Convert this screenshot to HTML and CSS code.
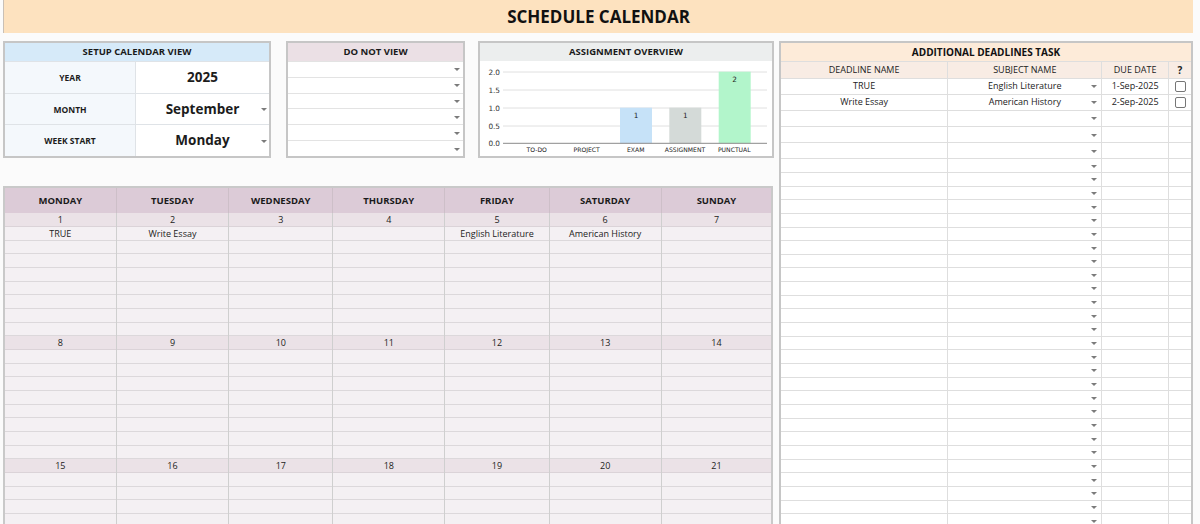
FILE: index.html
```html
<!DOCTYPE html>
<html lang="en">
<head>
<meta charset="utf-8">
<title>Schedule Calendar</title>
<link rel="stylesheet" href="styles.css">
</head>
<body>
<div class="page">
  <div class="title">SCHEDULE CALENDAR</div>
  <div class="main">
    <div class="left">
      <div class="top">
        <section class="panel setup">
          <div class="ph ph-blue">SETUP CALENDAR VIEW</div>
          <div class="srow"><div class="slabel">YEAR</div><div class="sval">2025</div></div>
          <div class="srow"><div class="slabel">MONTH</div><div class="sval dd">September</div></div>
          <div class="srow last"><div class="slabel">WEEK START</div><div class="sval dd">Monday</div></div>
        </section>
        <section class="panel dnv">
          <div class="ph ph-mauve">DO NOT VIEW</div>
          <div class="nrow dd"></div>
          <div class="nrow dd"></div>
          <div class="nrow dd"></div>
          <div class="nrow dd"></div>
          <div class="nrow dd"></div>
          <div class="nrow dd last"></div>
        </section>
        <section class="panel chart">
          <div class="ph ph-gray">ASSIGNMENT OVERVIEW</div>
          <svg class="plot" width="292" height="95" viewBox="0 0 292 95">
            <line class="grid" x1="23" y1="11" x2="287" y2="11"/>
            <line class="grid" x1="23" y1="29" x2="287" y2="29"/>
            <line class="grid" x1="23" y1="47" x2="287" y2="47"/>
            <line class="grid" x1="23" y1="65" x2="287" y2="65"/>
            <text class="ylab" x="20" y="13.8">2.0</text>
            <text class="ylab" x="20" y="31.8">1.5</text>
            <text class="ylab" x="20" y="49.8">1.0</text>
            <text class="ylab" x="20" y="67.8">0.5</text>
            <text class="ylab" x="20" y="85">0.0</text>
            <rect x="140" y="46.7" width="32" height="35.6" fill="#c6e2f8"/>
            <rect x="189.3" y="46.7" width="32" height="35.6" fill="#d4dad8"/>
            <rect x="238.7" y="10.7" width="32" height="71.6" fill="#b2f5cb"/>
            <line class="axis" x1="23" y1="82.3" x2="287" y2="82.3"/>
            <text class="vlab" x="156" y="56.8">1</text>
            <text class="vlab" x="205.3" y="56.8">1</text>
            <text class="vlab" x="254.7" y="20.8">2</text>
            <text class="xlab" x="56.7" y="91.3">TO-DO</text>
            <text class="xlab" x="106.7" y="91.3">PROJECT</text>
            <text class="xlab" x="155.7" y="91.3">EXAM</text>
            <text class="xlab" x="205" y="91.3">ASSIGNMENT</text>
            <text class="xlab" x="254.3" y="91.3">PUNCTUAL</text>
          </svg>
        </section>
      </div>
      <div class="cal">
        <div class="ch">MONDAY</div>
        <div class="ch">TUESDAY</div>
        <div class="ch">WEDNESDAY</div>
        <div class="ch">THURSDAY</div>
        <div class="ch">FRIDAY</div>
        <div class="ch">SATURDAY</div>
        <div class="ch">SUNDAY</div>

        <div class="day"><div class="date">1</div><div class="ev"><div>TRUE</div></div></div>
        <div class="day"><div class="date">2</div><div class="ev"><div>Write Essay</div></div></div>
        <div class="day"><div class="date">3</div><div class="ev"></div></div>
        <div class="day"><div class="date">4</div><div class="ev"></div></div>
        <div class="day"><div class="date">5</div><div class="ev"><div>English Literature</div></div></div>
        <div class="day"><div class="date">6</div><div class="ev"><div>American History</div></div></div>
        <div class="day"><div class="date">7</div><div class="ev"></div></div>

        <div class="day"><div class="date">8</div><div class="ev"></div></div>
        <div class="day"><div class="date">9</div><div class="ev"></div></div>
        <div class="day"><div class="date">10</div><div class="ev"></div></div>
        <div class="day"><div class="date">11</div><div class="ev"></div></div>
        <div class="day"><div class="date">12</div><div class="ev"></div></div>
        <div class="day"><div class="date">13</div><div class="ev"></div></div>
        <div class="day"><div class="date">14</div><div class="ev"></div></div>

        <div class="day"><div class="date">15</div><div class="ev"></div></div>
        <div class="day"><div class="date">16</div><div class="ev"></div></div>
        <div class="day"><div class="date">17</div><div class="ev"></div></div>
        <div class="day"><div class="date">18</div><div class="ev"></div></div>
        <div class="day"><div class="date">19</div><div class="ev"></div></div>
        <div class="day"><div class="date">20</div><div class="ev"></div></div>
        <div class="day"><div class="date">21</div><div class="ev"></div></div>
      </div>
    </div>

    <section class="deadlines">
      <div class="dh">ADDITIONAL DEADLINES TASK</div>
      <div class="r rh"><i>DEADLINE NAME</i><i>SUBJECT NAME</i><i>DUE DATE</i><i class="q">?</i></div>
      <div class="r"><i>TRUE</i><i class="s">English Literature</i><i>1-Sep-2025</i><i><b class="cb"></b></i></div>
      <div class="r"><i>Write Essay</i><i class="s">American History</i><i>2-Sep-2025</i><i><b class="cb"></b></i></div>
      <div class="r"><i></i><i class="s"></i><i></i><i></i></div>
      <div class="r"><i></i><i class="s"></i><i></i><i></i></div>
      <div class="r"><i></i><i class="s"></i><i></i><i></i></div>
      <div class="r sm"><i></i><i class="s"></i><i></i><i></i></div>
      <div class="r sm"><i></i><i class="s"></i><i></i><i></i></div>
      <div class="r sm"><i></i><i class="s"></i><i></i><i></i></div>
      <div class="r sm"><i></i><i class="s"></i><i></i><i></i></div>
      <div class="r sm"><i></i><i class="s"></i><i></i><i></i></div>
      <div class="r sm"><i></i><i class="s"></i><i></i><i></i></div>
      <div class="r sm"><i></i><i class="s"></i><i></i><i></i></div>
      <div class="r sm"><i></i><i class="s"></i><i></i><i></i></div>
      <div class="r sm"><i></i><i class="s"></i><i></i><i></i></div>
      <div class="r sm"><i></i><i class="s"></i><i></i><i></i></div>
      <div class="r sm"><i></i><i class="s"></i><i></i><i></i></div>
      <div class="r sm"><i></i><i class="s"></i><i></i><i></i></div>
      <div class="r sm"><i></i><i class="s"></i><i></i><i></i></div>
      <div class="r sm"><i></i><i class="s"></i><i></i><i></i></div>
      <div class="r sm"><i></i><i class="s"></i><i></i><i></i></div>
      <div class="r sm"><i></i><i class="s"></i><i></i><i></i></div>
      <div class="r sm"><i></i><i class="s"></i><i></i><i></i></div>
      <div class="r sm"><i></i><i class="s"></i><i></i><i></i></div>
      <div class="r sm"><i></i><i class="s"></i><i></i><i></i></div>
      <div class="r sm"><i></i><i class="s"></i><i></i><i></i></div>
      <div class="r sm"><i></i><i class="s"></i><i></i><i></i></div>
      <div class="r sm"><i></i><i class="s"></i><i></i><i></i></div>
      <div class="r sm"><i></i><i class="s"></i><i></i><i></i></div>
      <div class="r sm"><i></i><i class="s"></i><i></i><i></i></div>
      <div class="r sm"><i></i><i class="s"></i><i></i><i></i></div>
      <div class="r sm"><i></i><i class="s"></i><i></i><i></i></div>
      <div class="r sm"><i></i><i class="s"></i><i></i><i></i></div>
    </section>
  </div>
</div>
</body>
</html>
```
FILE: styles.css
```css
* { box-sizing: border-box; }
html, body {
  margin: 0;
  padding: 0;
  background: #fbfbfb;
  width: 1200px;
  height: 524px;
  overflow: hidden;
  font-family: "Open Sans", "Noto Sans", "Liberation Sans", sans-serif;
  color: #1c1c1c;
}
.page { width: 1200px; height: 524px; overflow: hidden; }

.title {
  margin-left: 3px;
  width: 1190px;
  height: 33px;
  background: #fde2bf;
  border-left: 1px solid #c9c0b6;
  text-align: center;
  font-weight: 700;
  font-size: 17px;
  line-height: 33px;
  color: #111;
}

.main {
  display: flex;
  align-items: flex-start;
  padding: 8px 0 0 3px;
}
.left { width: 771px; }
.top { display: flex; height: 117px; }

.panel {
  height: 117px;
  border: 2px solid #c6c6c6;
  background: #fff;
  display: flex;
  flex-direction: column;
}
.ph {
  height: 18px;
  flex: none;
  font-weight: 700;
  font-size: 9.5px;
  line-height: 18px;
  text-align: center;
  color: #1a1a1a;
}
.ph-blue { background: #d6eaf9; }
.ph-mauve { background: #ebe0e5; }
.ph-gray { background: #eceeee; }

.setup { width: 268px; }
.srow {
  flex: 1;
  display: flex;
  border-top: 1px solid #dfe3e7;
}
.slabel {
  width: 131px;
  background: #f4f8fc;
  border-right: 1px solid #dfe3e7;
  display: flex;
  align-items: center;
  justify-content: center;
  font-weight: 700;
  font-size: 8.5px;
}
.sval {
  flex: 1;
  position: relative;
  display: flex;
  align-items: center;
  justify-content: center;
  font-weight: 700;
  font-size: 13.5px;
  padding-bottom: 1px;
}
.sval.dd::after { right: 2px; }

.dd { position: relative; }
.dd::after,
.r i.s::after {
  content: "";
  position: absolute;
  top: 50%;
  margin-top: -1px;
  width: 0;
  height: 0;
  border-left: 3px solid transparent;
  border-right: 3px solid transparent;
  border-top: 3px solid #7b7b7b;
}

.dnv { width: 179px; margin-left: 15px; }
.nrow {
  flex: 1;
  border-top: 1px solid #e3e3e3;
}
.nrow.dd::after { right: 3px; }

.chart { width: 296px; margin-left: 13px; }
.plot { display: block; }
.grid { stroke: #e0e0e0; stroke-width: 1; }
.axis { stroke: #8a8a8a; stroke-width: 1; }
.ylab {
  font-family: "DejaVu Sans", "Verdana", sans-serif;
  font-size: 7.3px;
  fill: #333;
  text-anchor: end;
}
.vlab {
  font-family: "DejaVu Sans", sans-serif;
  font-size: 7.3px;
  fill: #222;
  text-anchor: middle;
}
.xlab {
  font-family: "DejaVu Sans", sans-serif;
  font-size: 6.1px;
  fill: #222;
  text-anchor: middle;
}

/* Calendar */
.cal {
  margin-top: 28px;
  width: 770px;
  border: 2px solid #c9c9c9;
  border-bottom: none;
  display: grid;
  grid-template-columns: 110.7px 112.6px 104px 112px 104.4px 112px 110.6px;
  grid-auto-rows: auto;
}
.ch {
  height: 25.3px;
  background: #dccbd7;
  font-weight: 700;
  font-size: 9.5px;
  line-height: 25.3px;
  text-align: center;
  border-left: 1px solid #cdbfc8;
  color: #1a1a1a;
}
.ch:first-child { border-left: none; }
.day {
  display: flex;
  flex-direction: column;
  border-left: 1px solid #cfcfcf;
}
.day:nth-child(7n+1) { border-left: none; }
.date {
  height: 13.67px;
  background: #ebe2e7;
  border-bottom: 1px solid #dbd3d8;
  font-size: 9px;
  line-height: 13px;
  text-align: center;
  color: #222;
}
.ev {
  height: 109.36px;
  background: repeating-linear-gradient(to bottom,
    #f4f0f3 0, #f4f0f3 12.67px, #dcd8db 12.67px, #dcd8db 13.67px);
}
.ev div {
  height: 13.67px;
  font-size: 9px;
  line-height: 13px;
  text-align: center;
  color: #222;
}

/* Deadlines */
.deadlines {
  width: 414px;
  margin-left: 5px;
  border: 2px solid #c6c6c6;
  border-bottom: none;
  background: #fff;
}
.dh {
  height: 18px;
  background: #fdebd9;
  font-weight: 700;
  font-size: 10px;
  line-height: 18px;
  text-align: center;
  color: #111;
}
.r {
  display: grid;
  grid-template-columns: 167.3px 154px 66.7px 22px;
  height: 16.12px;
}
.r.rh { height: 16.7px; background: #f8ece4; }
.r.sm { height: 13.67px; }
.r i {
  font-style: normal;
  position: relative;
  border-top: 1px solid #dedede;
  border-right: 1px solid #dedede;
  font-size: 9px;
  line-height: 14px;
  text-align: center;
  color: #222;
  display: flex;
  align-items: center;
  justify-content: center;
}
.r i:last-child { border-right: none; }
.r i.s::after { right: 4px; }
.r i.q { font-weight: 700; font-size: 10px; }
.cb {
  display: block;
  width: 11px;
  height: 11px;
  margin-left: 2px;
  border: 1px solid #767676;
  border-radius: 2px;
  background: #fff;
}
```
